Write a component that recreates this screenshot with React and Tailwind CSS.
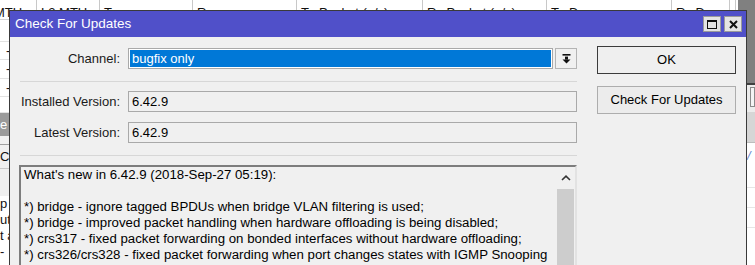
const headerCols = [
  { label: "MTU", w: 37, shift: true },
  { label: "L2 MTU", w: 63 },
  { label: "Tx", w: 93 },
  { label: "Rx", w: 104 },
  { label: "Tx Packet (p/s)", w: 126 },
  { label: "Rx Packet (p/s)", w: 124 },
  { label: "Tx Drops", w: 125 },
  { label: "Rx Drops", w: 58 },
  { label: "", w: 6 },
];

const notes = [
  "What's new in 6.42.9 (2018-Sep-27 05:19):",
  "",
  "*) bridge - ignore tagged BPDUs when bridge VLAN filtering is used;",
  "*) bridge - improved packet handling when hardware offloading is being disabled;",
  "*) crs317 - fixed packet forwarding on bonded interfaces without hardware offloading;",
  "*) crs326/crs328 - fixed packet forwarding when port changes states with IGMP Snooping",
];

function DropArrow() {
  return (
    <svg width="9" height="10" viewBox="0 0 9 10">
      <rect x="0.5" y="0" width="8" height="1.6" fill="#111" />
      <rect x="3" y="2.6" width="3" height="3" fill="#111" />
      <path d="M0.5 5.4 H8.5 L4.5 9.6 Z" fill="#111" />
    </svg>
  );
}

function Field({ label, children }) {
  return (
    <div className="flex items-center h-[21px]">
      <div className="w-[101px] text-right text-[13px] text-[#1a1a1a]">{label}</div>
      <div className="ml-[8px] flex-1 h-full">{children}</div>
    </div>
  );
}

function ReadOnlyBox({ value }) {
  return (
    <div className="h-full border border-[#a9a9a9] bg-[#f0f0f0] flex items-center pl-[3px] text-[13px] text-black">
      {value}
    </div>
  );
}

export default function App() {
  return (
    <div className="relative w-[755px] h-[265px] overflow-hidden bg-[#808080] font-['Liberation_Sans',Arial,sans-serif] text-[13px]">
      {/* background winbox windows */}
      <div className="flex flex-col h-full">
        <div className="flex h-[20px] w-[738px] bg-white border-b border-[#d4d4d4] shrink-0">
          {headerCols.map((c, i) => (
            <div
              key={i}
              style={{ width: c.w }}
              className="shrink-0 border-r border-[#c8c8c8] pl-[4px] pt-[5px] whitespace-nowrap leading-[16px] text-[#111]"
            >
              <span className={c.shift ? "block -ml-[10px]" : ""}>{c.label}</span>
            </div>
          ))}
        </div>
        <div className="flex flex-1">
          <div className="w-[9px] flex flex-col bg-white text-[13px] leading-[16px] text-[#111] whitespace-nowrap">
            <div className="h-[22px] border-b border-[#e2e2e2]" />
            <div className="h-[18px] border-b border-[#e2e2e2] flex items-center pl-[6px]">-</div>
            <div className="h-[19px] border-b border-[#e2e2e2] flex items-center pl-[6px]">-</div>
            <div className="h-[18px] border-b border-[#e2e2e2] flex items-center pl-[6px]">-</div>
            <div className="h-[16px] border-b border-[#e2e2e2]" />
            <div className="h-[23px] bg-[#9a9a9a] text-white flex items-center">e</div>
            <div className="h-[9px] bg-[#f0f0f0] border-b border-[#a0a0a0]" />
            <div className="h-[23px] bg-[#f0f0f0] flex items-center">C</div>
            <div className="h-[28px] bg-[#f0f0f0] border-t border-[#c8c8c8]" />
            <div className="h-[16px] flex items-center">p</div>
            <div className="h-[16px] flex items-center">ute</div>
            <div className="h-[16px] flex items-center">t a</div>
            <div className="h-[16px] flex items-center">-</div>
          </div>
          <div className="flex-1 bg-white" />
          <div className="w-[8px] flex flex-col">
            <div className="h-[63px] bg-[#808080]" />
            <div className="h-[2px] bg-[#404040]" />
            <div className="h-[27px] bg-[#ececec] pl-[3px] pt-[2px]">
              <div className="h-[20px] border border-[#8a8a8a] bg-[#f4f4f4]" />
            </div>
            <div className="h-[31px] bg-[#d6d6d6] border-b border-[#bdbdbd]" />
            <div className="h-[25px] bg-white text-[#6a8ad0] italic leading-[25px]">/</div>
            <div className="h-[20px] bg-white border-b border-[#e6e6e6]" />
            <div className="h-[20px] bg-white border-b border-[#e6e6e6]" />
            <div className="h-[20px] bg-white border-b border-[#e6e6e6]" />
            <div className="flex-1 bg-white" />
          </div>
        </div>
      </div>

      {/* Check For Updates dialog */}
      <div className="absolute left-[9px] top-[10px] w-[738px] h-[270px] border border-[#3a3a3a] bg-[#f0f0f0] flex flex-col">
        <div className="h-[26px] bg-[#5050c9] flex items-center pl-[5px] pr-[4px] shrink-0">
          <span className="text-white text-[13.5px] leading-none">Check For Updates</span>
          <div className="ml-auto flex gap-[3px]">
            <div className="w-[18px] h-[16px] bg-[#e4e4e4] border border-[#9a9a9a] flex items-center justify-center">
              <div className="w-[10px] h-[9px] border border-[#111] border-t-2" />
            </div>
            <div className="w-[18px] h-[16px] bg-[#e4e4e4] border border-[#9a9a9a] flex items-center justify-center">
              <svg width="9" height="9" viewBox="0 0 9 9">
                <path d="M1 1 L8 8 M8 1 L1 8" stroke="#111" strokeWidth="2" />
              </svg>
            </div>
          </div>
        </div>

        <div className="flex flex-1 pl-[9px] pr-[10px]">
          <div className="w-[558px] flex flex-col pt-[11px]">
            <Field label="Channel:">
              <div className="flex h-full">
                <div className="w-[425px] border border-[#a9a9a9] bg-white p-[1px]">
                  <div className="h-full bg-[#0078d7] text-white flex items-center pl-[2px]">bugfix only</div>
                </div>
                <div className="ml-[2px] w-[22px] border border-[#b4b4b4] bg-[#f0f0f0] flex items-center justify-center">
                  <DropArrow />
                </div>
              </div>
            </Field>

            <div className="mt-[12px] mb-[9px] h-[1px] bg-[#d7d7d7] ml-[1px]" />

            <div className="flex flex-col gap-[10px]">
              <Field label="Installed Version:">
                <ReadOnlyBox value="6.42.9" />
              </Field>
              <Field label="Latest Version:">
                <ReadOnlyBox value="6.42.9" />
              </Field>
            </div>

            <div className="mt-[12px] mb-[9px] h-[1px] bg-[#d7d7d7] ml-[1px]" />

            <div className="flex-1 flex border-t-2 border-l-2 border-[#7d7d7d] border-r-2 border-r-[#e2e2e2]">
              <div className="flex-1 pl-[3px] overflow-hidden text-[13.25px] leading-[16px] text-black whitespace-pre">
                {notes.map((line, i) => (
                  <div key={i} className="h-[16px]">{line}</div>
                ))}
              </div>
              <div className="w-[19px] flex flex-col">
                <div className="h-[22px] flex items-center justify-center">
                  <svg width="10" height="6" viewBox="0 0 10 6">
                    <path d="M1 5 L5 1.2 L9 5" stroke="#333" strokeWidth="1.6" fill="none" />
                  </svg>
                </div>
                <div className="flex-1 bg-[#cdcdcd] mx-[1px]" />
              </div>
            </div>
          </div>

          <div className="ml-[20px] w-[139px] flex flex-col gap-[12px] pt-[9px]">
            <button className="h-[28px] border border-[#3c3c3c] bg-[#efefef] text-[13px] text-black">OK</button>
            <button className="h-[28px] border border-[#adadad] bg-[#ececec] text-[13px] text-black">Check For Updates</button>
          </div>
        </div>
      </div>
    </div>
  );
}
